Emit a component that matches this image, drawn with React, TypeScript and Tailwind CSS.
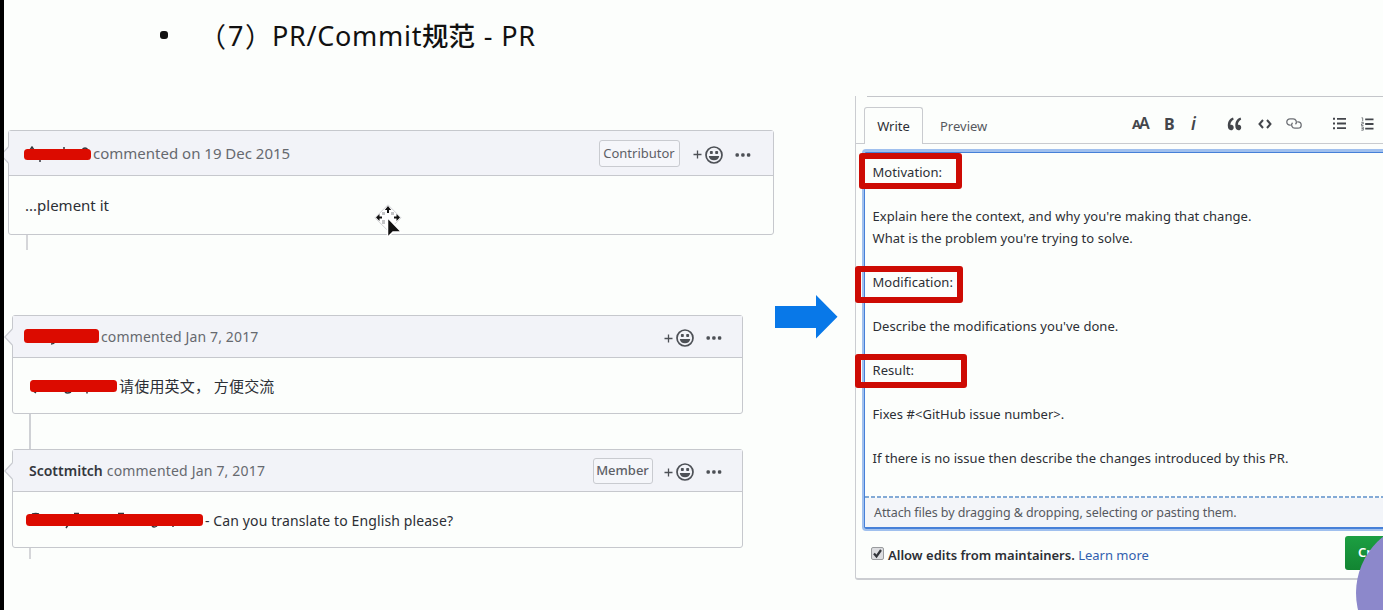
import React from "react";

function Smiley() {
  return (
    <svg width="18" height="18" viewBox="0 0 18 18" fill="none" className="shrink-0">
      <circle cx="9" cy="9" r="8" stroke="#4d5056" strokeWidth="1.7" />
      <rect x="4.9" y="5" width="2.9" height="3" rx="0.8" fill="#4d5056" />
      <rect x="10.2" y="5" width="2.9" height="3" rx="0.8" fill="#4d5056" />
      <path d="M3.8 10h10.4c-.2 2.800-2.300 4.300-5.200 4.300s-5-1.500-5.200-4.300z" fill="#4d5056" />
    </svg>
  );
}

function Actions({ className }: { className: string }) {
  return (
    <div className={"flex h-[20px] items-center " + className}>
      <svg width="9" height="9" viewBox="0 0 9 9" className="mr-[3px]">
        <path d="M4.500 .5v8M.5 4.500h8" stroke="#4d5056" strokeWidth="1.300" />
      </svg>
      <Smiley />
      <svg width="16" height="4" viewBox="0 0 16 4" className="ml-[12.500px]">
        <rect x="0.500" y="0.300" width="3.400" height="3.400" rx="1.300" fill="#4d5056" />
        <rect x="6.200" y="0.300" width="3.400" height="3.400" rx="1.300" fill="#4d5056" />
        <rect x="11.900" y="0.300" width="3.400" height="3.400" rx="1.300" fill="#4d5056" />
      </svg>
    </div>
  );
}

function Notch({ className }: { className: string }) {
  return (
    <svg width="9" height="18" viewBox="0 0 9 18" className={"absolute " + className}>
      <path d="M9 .5L8 1.500.8 9 8 16.500l1 1z" fill="#f2f3f8" />
      <path d="M8.300 1L.8 9l7.500 8" fill="none" stroke="#c9cbd1" strokeWidth="1.200" />
    </svg>
  );
}

function Redaction({ width, height, marks }: { width: number; height: number; marks: string }) {
  return (
    <svg width={width} height={height + 8} viewBox={`0 0 ${width} ${height + 8}`} className="shrink-0">
      <path d={marks} stroke="#34363c" strokeWidth="1.500" fill="none" />
      <rect x="0" y="4" width={width} height={height} rx="3.500" fill="#dc0b00" />
    </svg>
  );
}

function Glyphs() {
  return (
    <div className="flex h-[20px] items-center text-[#43464b]">
      <span className="w-[7px] pt-px text-[13px] font-bold leading-[20px]">A</span>
      <span className="-mt-px w-[11px] text-[16px] font-semibold leading-[20px]">A</span>
      <span className="ml-[14px] w-[11px] text-[16px] font-bold leading-[20px]">B</span>
      <span className="ml-[16px] w-[8px] text-[17px] font-semibold italic leading-[20px]">i</span>
      <svg width="15" height="14" viewBox="0 0 15 14" className="ml-[28px]" fill="#43464b">
        <path d="M6 .5C3 1.500.8 4.200.8 8.600c0 2.900 1.200 4.700 3.100 4.700 1.600 0 2.800-1.200 2.800-2.900 0-1.600-1-2.700-2.400-2.700-.4 0-.7.1-.9.200.1-2.400 1.300-4.200 3.300-5.300z" />
        <path d="M13.500 .5c-3 1-5.200 3.700-5.200 8.100 0 2.900 1.200 4.700 3.100 4.700 1.600 0 2.800-1.200 2.800-2.900 0-1.600-1-2.700-2.400-2.700-.4 0-.7.1-.9.200.1-2.400 1.300-4.200 3.300-5.300z" />
      </svg>
      <svg width="14" height="10" viewBox="0 0 14 10" className="ml-[16px]" fill="none" stroke="#43464b" strokeWidth="2">
        <path d="M5 1L1.500 5 5 9M9 1l3.500 4L9 9" />
      </svg>
      <svg width="16" height="11" viewBox="0 0 16 11" className="ml-[14px]" fill="none" stroke="#6c6f74" strokeWidth="1.300">
        <path d="M4.800 7.200H4A3.200 3.200 0 0 1 4 .8h3.200a3.200 3.200 0 0 1 2.300 5.400" />
        <path d="M11.200 3.800h.8a3.200 3.200 0 0 1 0 6.400H8.800a3.200 3.200 0 0 1-2.300-5.400" />
      </svg>
      <svg width="13" height="13" viewBox="0 0 13 13" className="ml-[31px]" fill="#43464b">
        <path d="M0 .8h2v2H0zM4 .9h9v1.800H4zM0 5.500h2v2H0zM4 5.600h9v1.800H4zM0 10.200h2v2H0zM4 10.300h9v1.800H4z" />
      </svg>
      <svg width="13" height="14" viewBox="0 0 13 14" className="ml-[15px]" fill="#43464b">
        <path d="M4.200 1.400H12.500v1.800H4.200zM4.200 6.100H12.500v1.800H4.200zM4.200 10.800H12.500v1.800H4.200z" />
        <path d="M.5 .8h1.200v3.400M.3 5.300h2v1.600H.5v1.700h2M.3 10h2v3.200h-2M.5 11.600h1.600" fill="none" stroke="#6c6f74" strokeWidth=".9" />
      </svg>
    </div>
  );
}

function Header() {
  return (
    <header className="flex h-[96px] shrink-0 pl-[156px] pt-[16px]">
      <span className="mt-[15px] h-[8px] w-[8px] rounded-[3px] bg-[#111]" />
      <h1 className="ml-[31px] flex whitespace-pre font-['Noto_Sans','Noto_Sans_CJK_SC',sans-serif] text-[27px] leading-[40px] text-[#111]">
        <span className="w-[29px] font-['Noto_Sans_CJK_SC',sans-serif]">（</span>
        <span className="w-[17px]">7</span>
        <span className="w-[27px] font-['Noto_Sans_CJK_SC',sans-serif]">）</span>
        <span className="w-[150px] tracking-[0.7px]">PR/Commit</span>
        <span className="w-[54px] text-[26.500px] font-medium">规范</span>
        <span className="tracking-[0.800px]"> - PR</span>
      </h1>
    </header>
  );
}

function Comments() {
  return (
    <section className="flex w-[771px] shrink-0 flex-col pt-[34px] text-[14px] text-[#2c2f35]">
      <article className="relative ml-[4px] h-[105px] w-[766px] rounded-[3px] border border-[#c6c8cd]">
        <Notch className="left-[-9px] top-[15px]" />
        <div className="flex h-[45px] items-center border-b border-[#c6c8cd] bg-[#f2f3f8] pl-[15px] pr-[22px] pt-px">
          <div className="pt-[2px]">
            <Redaction width={67} height={11} marks="M6 5l2-3 2 3M40 2v3M58 5q3-4 6 0M16 14v3" />
          </div>
          <span className="ml-[2px] grow whitespace-pre pb-px text-[15px] text-[#66696f]">commented on 19 Dec 2015</span>
          <span className="mr-[13px] flex h-[27px] w-[81px] items-center justify-center rounded-[3px] border border-[#c9cbd0] bg-[#f5f6fa] pt-px text-[13px] text-[#5d6066]">Contributor</span>
          <Actions className="mt-[2px]" />
        </div>
        <p className="pl-[16px] pt-[19px] text-[15px] leading-[20px]">...plement it</p>
      </article>
      <div className="ml-[22px] h-[15px] w-[2px] bg-[#d5d6d9]" />
      <article className="relative ml-[8px] mt-[65px] h-[99px] w-[731px] rounded-[3px] border border-[#c6c8cd]">
        <Notch className="left-[-9px] top-[12px]" />
        <div className="flex h-[42px] items-center border-b border-[#c6c8cd] bg-[#f2f3f8] pl-[11px] pr-[20px]">
          <div className="-mt-px">
            <Redaction width={75} height={14} marks="M31 17q-1 2-4 2" />
          </div>
          <span className="ml-[2px] grow whitespace-pre tracking-[0.14px] text-[#66696f]">commented Jan 7, 2017</span>
          <Actions className="mt-[3px]" />
        </div>
        <div className="flex h-[56px] items-center pl-[17px]">
          <Redaction width={87} height={12} marks="M3 5q-4 5-1 9l4 3M35 16q2 2 6 0M57 14v3.500" />
          <span className="ml-[2px] whitespace-pre font-['Noto_Sans_CJK_SC',sans-serif] text-[15px] tracking-[0.200px]">请使用英文， 方便交流</span>
        </div>
      </article>
      <div className="ml-[25px] h-[35px] w-[2px] bg-[#cfd1d5]" />
      <article className="relative ml-[8px] h-[99px] w-[731px] rounded-[3px] border border-[#c6c8cd]">
        <Notch className="left-[-9px] top-[12px]" />
        <div className="flex h-[42px] items-center border-b border-[#c6c8cd] bg-[#f2f3f8] pl-[16px] pr-[20px]">
          <b className="whitespace-pre font-semibold text-[#34373d]">Scottmitch</b>
          <span className="ml-[4px] grow whitespace-pre tracking-[0.180px] text-[#66696f]">commented Jan 7, 2017</span>
          <span className="mr-[11px] flex h-[26px] w-[60px] items-center justify-center rounded-[3px] border border-[#c9cbd0] bg-[#f5f6fa] text-[13px] font-medium text-[#5d6066]">Member</span>
          <Actions className="mt-[3px]" />
        </div>
        <div className="flex h-[56px] items-center pl-[13px]">
          <Redaction width={177} height={12} marks="M6 4q4-1 7 0M42 15l-2 3M48 3.500h5M92 3.500h6M126 16q2 2 5 0M147 14v3" />
          <span className="ml-[2px] whitespace-pre tracking-[0.110px]">- Can you translate to English please?</span>
        </div>
      </article>
      <div className="ml-[25px] h-[11px] w-[2px] bg-[#d5d6d9]" />
    </section>
  );
}

function Editor() {
  const lines = [
    "Motivation:",
    "",
    "Explain here the context, and why you're making that change.",
    "What is the problem you're trying to solve.",
    "",
    "Modification:",
    "",
    "Describe the modifications you've done.",
    "",
    "Result:",
    "",
    "Fixes #<GitHub issue number>.",
    "",
    "If there is no issue then describe the changes introduced by this PR.",
  ];
  return (
    <section className="relative h-[484px] w-[528px] shrink-0 rounded-bl-[3px] border-b-2 border-l border-[#cbcdd1] text-[13px] text-[#2c2f35]">
      <div className="ml-[11px] h-px bg-[#c4c6ca]" />
      <div className="flex h-[47px] items-end">
        <div className="h-px w-[8px] bg-[#c9cbcf]" />
        <div className="flex h-[37px] w-[59px] items-center justify-center rounded-t-[3px] border border-b-0 border-[#c9cbcf] pt-px">Write</div>
        <div className="flex h-[37px] grow items-center border-b border-[#c9cbcf] pl-[17px] text-[#56595f]">
          <span className="w-[192px] pt-[3px]">Preview</span>
          <div className="mb-[3px]">
            <Glyphs />
          </div>
        </div>
      </div>
      <div className="ml-[6px] mt-[5px] h-[382px] w-[534px] rounded-[4px] border-[2px] border-t-[3px] border-[#a0c0ee]">
        <div className="flex h-full flex-col rounded-[2px] border border-b-2 border-[#4680d8]">
          <div className="grow pl-[7.500px] pt-[8px] tracking-[0.05px]">
            {lines.map((line, i) => (
              <p key={i} className="h-[22px] whitespace-pre leading-[22px]">{line}</p>
            ))}
          </div>
          <svg width="528" height="2" className="shrink-0">
            <path d="M0 1h528" stroke="#5b8fc9" strokeWidth="1.500" strokeDasharray="4 2" />
          </svg>
          <div className="flex h-[29px] shrink-0 items-center whitespace-pre bg-[#f3f5f9] pl-[9px] pt-px text-[12.500px] tracking-[-0.090px] text-[#56595f]">
            Attach files by dragging &amp; dropping, selecting or pasting them.
          </div>
        </div>
      </div>
      <div className="flex h-[50px] items-center pl-[15px]">
        <svg width="13" height="13" viewBox="0 0 13 13" className="mb-[5px]">
          <rect x=".5" y=".5" width="12" height="12" rx="1.500" fill="#dcdde0" stroke="#9a9c9f" />
          <path d="M3 6.500l2.500 3L10 3" fill="none" stroke="#33363b" strokeWidth="2.200" />
        </svg>
        <b className="ml-[4px] whitespace-pre font-semibold">Allow edits from maintainers. </b>
        <span className="text-[#3160ae]">Learn more</span>
      </div>
      <div className="absolute left-[489px] top-[440px] flex h-[34px] w-[39px] items-center overflow-hidden rounded-l-[3px] bg-linear-to-b from-[#1c9f42] to-[#128532] pl-[13px] text-[13px] font-semibold text-white">Cr</div>
      <div className="absolute left-[3px] top-[57px] h-[36px] w-[103px] rounded-[3px] border-[6px] border-[#cd0b04]" />
      <div className="absolute left-[-1px] top-[170px] h-[37px] w-[108px] rounded-[3px] border-[6px] border-[#cd0b04]" />
      <div className="absolute left-[-1px] top-[258px] h-[34px] w-[112px] rounded-[3px] border-[6px] border-[#cd0b04]" />
    </section>
  );
}

export default function App() {
  return (
    <div className="relative flex h-[610px] w-[1383px] overflow-hidden bg-[#fcfefc] font-['Noto_Sans','Noto_Sans_CJK_SC',sans-serif]">
      <div className="w-[4px] shrink-0 bg-black" />
      <main className="flex w-[1379px] flex-col overflow-hidden">
        <Header />
        <div className="flex">
          <Comments />
          <div className="w-[80px] shrink-0 pt-[199px]">
            <svg width="63" height="44" viewBox="0 0 63 44">
              <path d="M0 11h41V0l21.500 21.800L41 43.500V33H0z" fill="#0878e8" />
            </svg>
          </div>
          <Editor />
        </div>
      </main>
      <div className="absolute left-[1356px] top-[521px] h-[144px] w-[144px] rounded-full bg-[#8c88cb]" />
      <svg width="30" height="36" viewBox="0 0 30 36" className="absolute left-[373px] top-[204px]">
        <path d="M15 .8l13 13-13 13-13-13z" fill="#fff" stroke="#d2d3d6" strokeWidth="1" />
        <path d="M9 8h3v3H9zM18 8h3v3h-3zM9 16h3v4H9z" fill="#c4c5c7" />
        <path d="M15 2l3.200 4H16v3h-2V6h-2.200zM3 13.500L6.500 10v2.500H9v2H6.500V17zM27 13.500L23.500 10v2.500H21v2h2.500V17z" fill="#111" />
        <path d="M14.500 13.500v20l5.500-5.500h8.500z" fill="#111" stroke="#fff" strokeWidth="1.500" />
      </svg>
    </div>
  );
}
